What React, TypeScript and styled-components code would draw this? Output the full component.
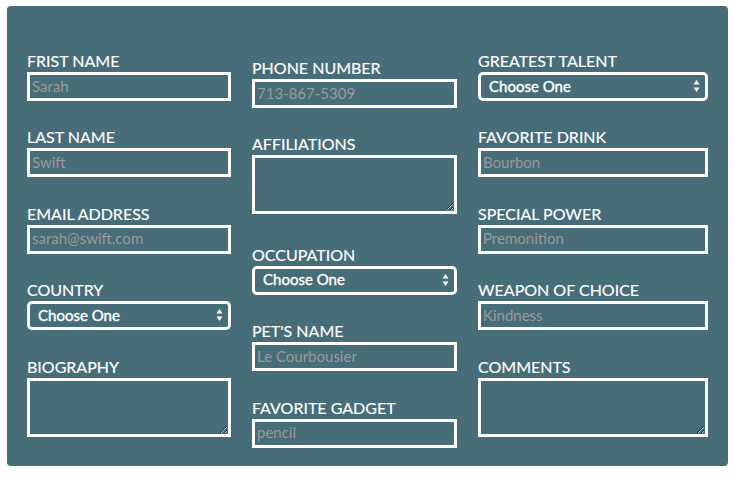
import React from 'react';
import styled, { createGlobalStyle } from 'styled-components';

const GlobalStyle = createGlobalStyle`
  html, body { margin: 0; padding: 0; background: #fff; }
  body { font-family: Lato, "Open Sans", sans-serif; }
  * { box-sizing: border-box; }
`;

const Page = styled.div`
  padding: 6px 5px 0 7px;
`;

const Panel = styled.form`
  width: 721px;
  height: 460px;
  background: #466d78;
  border-radius: 4px;
  padding: 46px 20px 0 20px;
  display: grid;
  grid-template-columns: 204px 205px 230px;
  column-gap: 21px;
  align-items: start;
`;

const Column = styled.div<{ offset?: number }>`
  display: flex;
  flex-direction: column;
  gap: 27.4px;
  padding-top: ${p => p.offset || 0}px;
`;

const Field = styled.div<{ tall?: boolean }>`
  display: flex;
  flex-direction: column;
  gap: 2px;
  margin-bottom: ${p => (p.tall ? 4 : 0)}px;
`;

const Label = styled.label`
  display: block;
  color: #fff;
  font-size: 16px;
  line-height: 18px;
  font-weight: 400;
  text-transform: uppercase;
  white-space: nowrap;
  -webkit-text-stroke: 0.15px #fff;
`;

const Input = styled.input`
  display: block;
  width: 100%;
  height: 29px;
  margin: 0;
  padding: 0 2px 2px;
  border: 3px solid #fff;
  border-radius: 0;
  background: transparent;
  color: #fff;
  font-family: Lato, sans-serif;
  font-size: 15px;
  outline: none;
  &::placeholder { color: #9a9a9a; opacity: 1; }
`;

const Area = styled.textarea`
  display: block;
  width: 100%;
  height: 59px;
  margin: 0;
  padding: 2px;
  border: 3px solid #fff;
  border-radius: 0;
  background: transparent;
  color: #fff;
  font-family: Lato, sans-serif;
  font-size: 15px;
  outline: none;
`;

const SelectWrap = styled.div`
  position: relative;
`;

const Select = styled.select`
  display: block;
  width: 100%;
  height: 29px;
  margin: 0;
  padding: 0 24px 2px 8px;
  border: 3px solid #fff;
  border-radius: 5px;
  background: transparent;
  color: #fff;
  font-family: Lato, sans-serif;
  font-size: 15px;
  font-weight: 400;
  -webkit-text-stroke: 0.35px #fff;
  appearance: none;
  -webkit-appearance: none;
  outline: none;
`;

const Arrows = styled.svg`
  position: absolute;
  right: 8px;
  top: 8px;
  pointer-events: none;
`;

type Kind = 'text' | 'area' | 'select';

interface FieldDef {
  label: string;
  kind: Kind;
  placeholder?: string;
}

const columns: { offset: number; fields: FieldDef[] }[] = [
  {
    offset: 0,
    fields: [
      { label: 'Frist Name', kind: 'text', placeholder: 'Sarah' },
      { label: 'Last Name', kind: 'text', placeholder: 'Swift' },
      { label: 'Email Address', kind: 'text', placeholder: 'sarah@swift.com' },
      { label: 'Country', kind: 'select' },
      { label: 'Biography', kind: 'area' },
    ],
  },
  {
    offset: 7,
    fields: [
      { label: 'Phone Number', kind: 'text', placeholder: '713-867-5309' },
      { label: 'Affiliations', kind: 'area' },
      { label: 'Occupation', kind: 'select' },
      { label: "Pet's Name", kind: 'text', placeholder: 'Le Courbousier' },
      { label: 'Favorite Gadget', kind: 'text', placeholder: 'pencil' },
    ],
  },
  {
    offset: 0,
    fields: [
      { label: 'Greatest Talent', kind: 'select' },
      { label: 'Favorite Drink', kind: 'text', placeholder: 'Bourbon' },
      { label: 'Special Power', kind: 'text', placeholder: 'Premonition' },
      { label: 'Weapon of Choice', kind: 'text', placeholder: 'Kindness' },
      { label: 'Comments', kind: 'area' },
    ],
  },
];

const Control: React.FC<{ def: FieldDef }> = ({ def }) => {
  if (def.kind === 'area') return <Area />;
  if (def.kind === 'select')
    return (
      <SelectWrap>
        <Select defaultValue="">
          <option value="">Choose One</option>
        </Select>
        <Arrows width="7" height="13" viewBox="0 0 7 13">
          <polygon points="0.5,4.5 6.5,4.5 3.5,0" fill="#fff" />
          <polygon points="0.5,7.5 6.5,7.5 3.5,12" fill="#fff" />
        </Arrows>
      </SelectWrap>
    );
  return <Input type="text" placeholder={def.placeholder} />;
};

export default function App() {
  return (
    <Page>
      <GlobalStyle />
      <Panel>
        {columns.map((col, i) => (
          <Column key={i} offset={col.offset}>
            {col.fields.map(f => (
              <Field key={f.label} tall={f.kind === 'area'}>
                <Label>{f.label}</Label>
                <Control def={f} />
              </Field>
            ))}
          </Column>
        ))}
      </Panel>
    </Page>
  );
}
